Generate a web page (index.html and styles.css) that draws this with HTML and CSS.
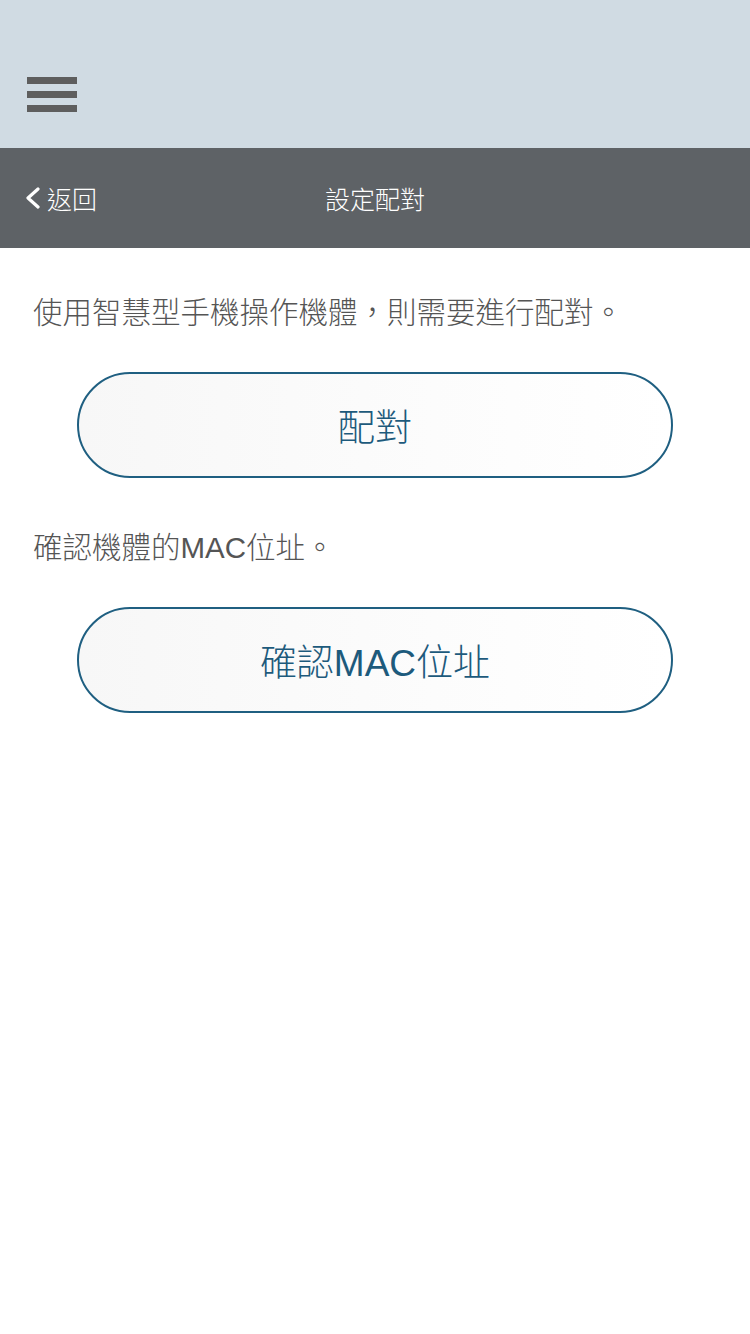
FILE: index.html
```html
<!DOCTYPE html>
<html lang="zh-Hant">
<head>
    <meta charset="UTF-8">
    <meta name="viewport" content="width=device-width, initial-scale=1.0">
    <title>設定配對</title>
    <link rel="stylesheet" href="styles.css">
</head>
<body>
    <header class="top-bar">
        <div class="menu-icon">
            <span></span>
            <span></span>
            <span></span>
        </div>
    </header>

    <nav class="nav-bar">
        <div class="back">
            <svg class="chevron" width="18" height="22" viewBox="0 0 18 22">
                <path d="M14 2 L4 11 L14 20" fill="none" stroke="#fff" stroke-width="3.2" stroke-linecap="round" stroke-linejoin="round"/>
            </svg>
            <span>返回</span>
        </div>
        <div class="title">設定配對</div>
    </nav>

    <main class="content">
        <p class="desc">使用智慧型手機操作機體，則需要進行配對。</p>
        <button class="pill">配對</button>

        <p class="desc">確認機體的MAC位址。</p>
        <button class="pill">確認MAC位址</button>
    </main>
</body>
</html>
```

FILE: styles.css
```css
body {
    margin: 0;
    width: 750px;
    min-height: 1334px;
    background: #fff;
    font-family: "Liberation Sans", "Noto Sans CJK TC", sans-serif;
}
.top-bar {
    height: 148px;
    background: #d0dbe3;
    display: flex;
    align-items: center;
    padding: 40px 27px 0;
    box-sizing: border-box;
}
.menu-icon {
    display: flex;
    flex-direction: column;
    gap: 7px;
}
.menu-icon span {
    display: block;
    width: 50px;
    height: 7px;
    background: #5e5e5e;
}
.nav-bar {
    height: 100px;
    background: #5e6266;
    position: relative;
    display: flex;
    align-items: center;
    color: #fff;
}
.back {
    display: flex;
    align-items: center;
    gap: 5px;
    padding-left: 24px;
    font-size: 25px;
    font-weight: 300;
}
.chevron {
    display: block;
}
.title {
    position: absolute;
    left: 0;
    right: 0;
    text-align: center;
    font-size: 25px;
    font-weight: 300;
    pointer-events: none;
}
.content {
    padding: 36px 0 0 33px;
    display: flex;
    flex-direction: column;
}
.desc {
    margin: 0;
    font-size: 29.5px;
    font-weight: 300;
    line-height: 58px;
    color: #555;
}
.pill {
    margin: 30px 0 41px 44px;
    width: 596px;
    height: 106px;
    border: 2.5px solid #1f5f81;
    border-radius: 53px;
    background: linear-gradient(90deg, #f7f7f7 0%, #fcfcfc 60%, #fff 100%);
    color: #1d5a7c;
    font-family: "Liberation Sans", "Noto Sans CJK TC", sans-serif;
    font-size: 37px;
    font-weight: 300;
    cursor: pointer;
}
```
